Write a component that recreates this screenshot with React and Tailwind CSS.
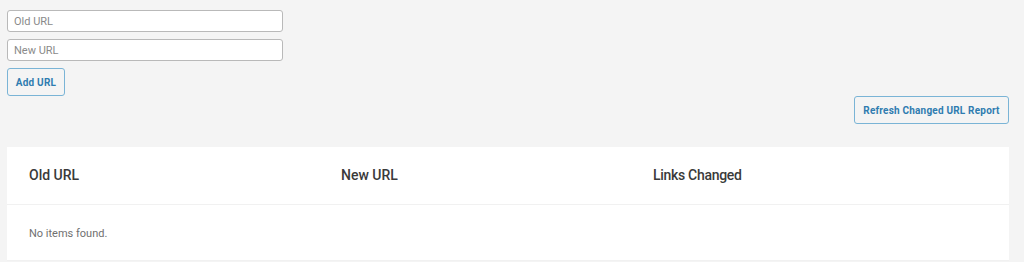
export default function App() {
   return (
      <div className="min-h-[262px] bg-[#f4f4f4] pl-[7px] pr-[15px] pt-[10px] font-['Roboto',sans-serif]">
         <div className="flex w-[276px] flex-col gap-[7px]">
            <input
               type="text"
               placeholder="Old URL"
               className="h-[22px] rounded-[3px] border border-[#b9b9b9] bg-white px-[6px] text-[11px] text-[#444] placeholder:text-[#8a8a8a] outline-none"
            />
            <input
               type="text"
               placeholder="New URL"
               className="h-[22px] rounded-[3px] border border-[#b9b9b9] bg-white px-[6px] text-[11px] text-[#444] placeholder:text-[#8a8a8a] outline-none"
            />
            <button className="h-[28px] w-[58px] rounded-[3px] border border-[#7ab4d6] bg-[#f4f4f4] text-[10px] font-bold tracking-[0.2px] text-[#2f7cb0]">
               Add URL
            </button>
         </div>

         <div className="flex justify-end">
            <button className="h-[28px] w-[155px] rounded-[3px] border border-[#7ab4d6] bg-[#f4f4f4] text-[10px] font-bold tracking-[0.2px] text-[#2f7cb0]">
               Refresh Changed URL Report
            </button>
         </div>

         <div className="mt-[23px] bg-white">
            <div className="grid h-[58px] grid-cols-[312px_312px_1fr] items-center border-b border-[#f1f1f1] pl-[22px] text-[14px] font-medium text-[#3a3a3a]">
               <span>Old URL</span>
               <span>New URL</span>
               <span className="tracking-[-0.3px]">Links Changed</span>
            </div>
            <div className="flex h-[56px] items-center border-b border-[#f1f1f1] pl-[22px] pt-[3px] text-[11px] text-[#707070]">
               No items found.
            </div>
         </div>
      </div>
   );
}
